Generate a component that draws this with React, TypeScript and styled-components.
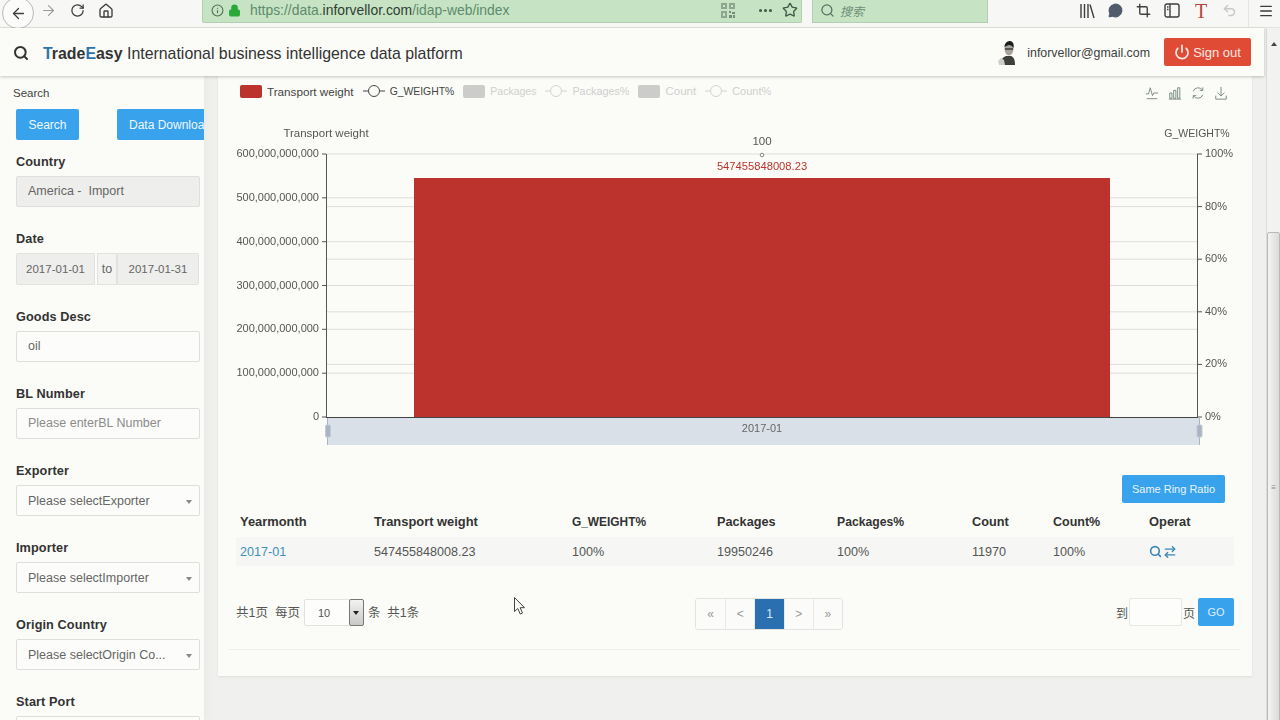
import * as React from "react";
import styled, { createGlobalStyle } from "styled-components";
import {
  ArrowLeft,
  ArrowRight,
  RotateCw,
  Home,
  Info,
  Lock,
  Ellipsis,
  Star,
  Search,
  MessageCircle,
  Crop,
  Undo2,
  Menu,
  Power,
  ArrowRightLeft,
} from "lucide-react";

const GlobalStyle = createGlobalStyle`
  html, body {
    margin: 0;
    padding: 0;
    width: 1280px;
    height: 720px;
    overflow: hidden;
    background: #f0f1ee;
    font-family: "Liberation Sans", Arial, "Noto Sans CJK SC", sans-serif;
    color: #333;
  }
  * { box-sizing: border-box; }
`;

const Shell = styled.div`
  width: 1280px;
  height: 720px;
  display: flex;
  flex-direction: column;
  overflow: hidden;
  position: relative;
`;

/* ---- browser chrome ---- */
const BrowserBar = styled.div`
  height: 28px;
  flex: none;
  display: flex;
  align-items: flex-start;
  background: #f7f7f5;
  border-bottom: 1px solid #e4e4e2;
  color: #3c3c3c;
`;

const BackButton = styled.div`
  width: 32px;
  height: 32px;
  margin: -3px 0 0 2px;
  border: 1px solid #b9b9b9;
  border-radius: 50%;
  background: #fbfbfa;
  display: flex;
  align-items: center;
  justify-content: center;
  flex: none;
`;

const NavIcons = styled.div`
  display: flex;
  align-items: center;
  height: 21px;
  gap: 13px;
  margin-left: 6px;
  width: 162px;
  flex: none;
`;

const UrlBox = styled.div`
  width: 600px;
  height: 23px;
  flex: none;
  background: #c6e4c4;
  border: 1px solid #b3cfb1;
  border-top: 0;
  display: flex;
  align-items: center;
  padding: 0 3px 2px 8px;
  color: #5f8a6c;
  font-size: 13.9px;
  border-radius: 0 0 2px 2px;
`;

const UrlText = styled.span`
  margin-left: 9px;
  flex: 1;
  white-space: nowrap;
  b {
    font-weight: 400;
    color: #2f3d33;
  }
`;

const UrlIcons = styled.div`
  display: flex;
  align-items: center;
  gap: 8px;
  color: #3f5a48;
`;

const SearchBox = styled.div`
  width: 176px;
  height: 23px;
  flex: none;
  margin-left: 10px;
  background: #c6e4c4;
  border: 1px solid #b3cfb1;
  border-top: 0;
  display: flex;
  align-items: center;
  gap: 5px;
  padding: 0 0 2px 7px;
  font-size: 12px;
  font-style: italic;
  color: #6f8f78;
  font-family: "Noto Sans CJK SC", sans-serif;
`;

const ToolIcons = styled.div`
  margin-left: 91px;
  height: 21px;
  display: flex;
  align-items: center;
  gap: 13px;
  color: #3f3f3f;
`;

const FontT = styled.span`
  font-family: "Liberation Serif", serif;
  font-size: 20px;
  color: #b2493c;
  line-height: 24px;
  height: 24px;
  width: 16px;
  text-align: center;
`;

const MenuSlot = styled.div`
  margin-left: 11px;
  padding-left: 9px;
  height: 27px;
  display: flex;
  padding-top: 3px;
  border-left: 1px solid #e4e4e2;
`;

/* ---- page ---- */
const Viewport = styled.div`
  flex: 1;
  min-height: 0;
  display: flex;
`;

const PageColumn = styled.div`
  flex: 1;
  min-width: 0;
  display: flex;
  flex-direction: column;
`;

const Header = styled.header`
  height: 48px;
  flex: none;
  display: flex;
  align-items: center;
  background: #fbfcf8;
  box-shadow: 0 1px 3px rgba(0, 0, 0, 0.22);
  padding: 1px 13px 0 13px;
  position: relative;
  z-index: 2;
`;

const Brand = styled.div`
  margin-left: 14px;
  padding-top: 2px;
  font-size: 15.9px;
  color: #333;
  flex: 1;
  white-space: nowrap;
  b {
    font-weight: 700;
  }
  i {
    font-style: normal;
    color: #2f74a8;
  }
`;

const Email = styled.span`
  font-size: 12.4px;
  margin: 0 14px 0 10px;
  color: #3d3d3d;
`;

const SignOut = styled.button`
  width: 87px;
  height: 28px;
  margin-top: -1px;
  border: 0;
  border-radius: 2px;
  background: #e04b36;
  color: #fbe9e4;
  font: 13px "Liberation Sans", sans-serif;
  display: flex;
  align-items: center;
  justify-content: center;
  gap: 3px;
  padding: 0;
`;

const Body = styled.div`
  flex: 1;
  min-height: 0;
  display: flex;
`;

const Sidebar = styled.aside`
  width: 204px;
  flex: none;
  background: #fbfcf8;
  overflow: hidden;
  padding: 10px 4px 0 16px;
  box-shadow: 3px 0 8px rgba(0, 0, 0, 0.03);
`;

const SidebarTitle = styled.div`
  font-size: 11.5px;
  line-height: 14px;
  margin-left: -3px;
  color: #444;
`;

const ButtonRow = styled.div`
  display: flex;
  gap: 38px;
  margin: 9px -4px 0 0;
  overflow: hidden;
`;

const BlueButton = styled.button`
  height: 31px;
  flex: none;
  border: 0;
  border-radius: 2px 0 0 2px;
  background: #38a2ed;
  color: #f0f8fe;
  font: 12px "Liberation Sans", sans-serif;
  padding: 0 12px;
  white-space: nowrap;
  &:first-child {
    width: 63px;
    padding: 0;
    border-radius: 2px;
  }
`;

const FieldList = styled.div`
  margin-top: 14.5px;
  display: flex;
  flex-direction: column;
  gap: 25.15px;
`;

const Field = styled.div`
  display: flex;
  flex-direction: column;
  gap: 6px;
`;

const Label = styled.label`
  font-size: 12.7px;
  line-height: 15px;
  height: 15px;
  font-weight: 700;
  color: #333;
  letter-spacing: 0.1px;
`;

const InputBox = styled.div<{ $muted?: boolean; $placeholder?: boolean }>`
  height: 31px;
  width: 184px;
  flex: none;
  border: 1px solid #dedfdc;
  border-radius: 2px;
  background: ${(p) => (p.$muted ? "#eeeeec" : "#fcfdfa")};
  color: ${(p) => (p.$placeholder ? "#8b8b8b" : "#666")};
  font-size: 12.5px;
  display: flex;
  align-items: center;
  justify-content: space-between;
  padding: 0 7px 0 11px;
  white-space: nowrap;
`;

const Caret = styled.span`
  width: 0;
  height: 0;
  border-left: 3.5px solid transparent;
  border-right: 3.5px solid transparent;
  border-top: 4px solid #888;
  margin-top: 2px;
`;

const DateGroup = styled.div`
  display: flex;
  height: 32px;
  width: 183px;
  color: #666;
`;

const DateCell = styled.div<{ $w: number; $addon?: boolean }>`
  width: ${(p) => p.$w}px;
  flex: none;
  background: ${(p) => (p.$addon ? "#f3f4f1" : "#eeeeec")};
  border: 1px solid #e2e3e0;
  font-size: ${(p) => (p.$addon ? "12.5px" : "11.5px")};
  display: flex;
  align-items: center;
  justify-content: center;
  &:first-child {
    border-radius: 2px 0 0 2px;
    margin-right: 2px;
  }
  &:last-child {
    border-radius: 0 2px 2px 0;
  }
`;

const Gutter = styled.div`
  width: 14px;
  flex: none;
`;

const Main = styled.main`
  width: 1034px;
  height: 600px;
  flex: none;
  background: #fbfcf8;
  box-shadow: 0 1px 2px rgba(0, 0, 0, 0.08);
  display: flex;
  flex-direction: column;
`;

const LegendBar = styled.div`
  height: 30px;
  flex: none;
  display: flex;
  align-items: center;
  padding: 0 24px 0 22px;
`;

const LegendItem = styled.div<{ $off?: boolean; $size: number }>`
  display: flex;
  align-items: center;
  gap: 5px;
  margin-right: 9px;
  font-size: ${(p) => p.$size}px;
  color: ${(p) => (p.$off ? "#cfcfcd" : "#444")};
  white-space: nowrap;
`;

const Swatch = styled.span<{ $color: string }>`
  width: 22px;
  height: 13px;
  border-radius: 2px;
  background: ${(p) => p.$color};
`;

const Toolbox = styled.div`
  margin-left: auto;
  margin-top: 4px;
  display: flex;
  gap: 9px;
  color: #6f7f78;
`;

const ChartSvg = styled.svg`
  display: block;
  flex: none;
  font-family: "Liberation Sans", sans-serif;
  will-change: transform;
`;

const RatioRow = styled.div`
  display: flex;
  justify-content: flex-end;
  padding: 25px 27px 0 0;
  flex: none;
`;

const RatioButton = styled.button`
  width: 103px;
  height: 28px;
  border: 0;
  border-radius: 2px;
  background: #38a2ed;
  color: #eaf5fd;
  font: 11px "Liberation Sans", sans-serif;
  padding: 0;
`;

const DataTable = styled.table`
  width: 998px;
  margin: 4px 0 0 18px;
  border-collapse: collapse;
  table-layout: fixed;
  flex: none;
  td {
    height: 29px;
    padding: 0 0 0 4px;
    background: #f6f7f4;
    color: #555;
    font-size: 12.6px;
  }
  td a {
    color: #3f8fb8;
  }
`;

const HeadCell = styled.th<{ $size: number }>`
  height: 30px;
  padding: 0 0 1px 4px;
  text-align: left;
  font-weight: 700;
  font-size: ${(p) => p.$size}px;
  color: #333;
`;

const OperatIcons = styled.span`
  display: inline-flex;
  align-items: center;
  gap: 1px;
  color: #3b86b8;
  vertical-align: middle;
`;

const Pager = styled.div`
  margin: 32px 18px 0 18px;
  height: 32px;
  flex: none;
  display: flex;
  align-items: flex-start;
  font-size: 12px;
  color: #555;
  white-space: nowrap;
`;

const PagerInfo = styled.div`
  width: 459px;
  flex: none;
  height: 27px;
  display: flex;
  align-items: center;
  font-size: 12.5px;
  font-family: "Liberation Sans", "Noto Sans CJK SC", sans-serif;
`;

const SizeSelect = styled.div`
  width: 60px;
  height: 27px;
  margin: 1px 4px -1px;
  border: 1px solid #e2e3e0;
  border-radius: 2px;
  background: #fdfdfb;
  display: flex;
  align-items: center;
  justify-content: space-between;
  padding-left: 13px;
  font-size: 11px;
`;

const SizeArrow = styled.span`
  width: 15px;
  height: 27px;
  margin-right: -1px;
  border: 1px solid #777;
  border-radius: 2px;
  background: linear-gradient(#f2f2f2, #c9c9c7);
  display: flex;
  align-items: center;
  justify-content: center;
  &::after {
    content: "";
    border-left: 3px solid transparent;
    border-right: 3px solid transparent;
    border-top: 4px solid #222;
  }
`;

const Pagination = styled.div`
  display: flex;
  height: 32px;
  border: 1px solid #e3e4e1;
  border-radius: 3px;
  overflow: hidden;
  flex: none;
`;

const PageCell = styled.div<{ $active?: boolean }>`
  width: 29.2px;
  display: flex;
  align-items: center;
  justify-content: center;
  color: ${(p) => (p.$active ? "#d9ebf7" : "#999")};
  background: ${(p) => (p.$active ? "#2a6fb0" : "#fbfcf9")};
  border-left: 1px solid #e9eae7;
  font-size: 12px;
  &:first-child {
    border-left: 0;
  }
`;

const GoTo = styled.div`
  margin-left: auto;
  display: flex;
  align-items: center;
  height: 28px;
  font-family: "Liberation Sans", "Noto Sans CJK SC", sans-serif;
`;

const GoInput = styled.div`
  width: 53px;
  height: 28px;
  margin: 0 1px;
  border: 1px solid #e6e7e4;
  border-radius: 2px;
  background: #fdfdfb;
`;

const GoButton = styled.button`
  width: 36px;
  height: 28px;
  margin-left: 3px;
  border: 0;
  border-radius: 2px;
  background: #38a2ed;
  color: #dff0fc;
  font: 11px "Liberation Sans", sans-serif;
  padding: 0;
`;

const Rule = styled.div`
  margin: 19px 12px 0 10px;
  border-top: 1px solid #eff0ed;
  flex: none;
`;

/* ---- scrollbar ---- */
const ScrollTrack = styled.div`
  width: 14px;
  flex: none;
  margin-left: 2px;
  background: #f2f3f0;
  border-left: 1px solid #dcdcda;
  display: flex;
  flex-direction: column;
  align-items: center;
  overflow: hidden;
`;

const ScrollUp = styled.span`
  margin-top: 14px;
  border-left: 3px solid transparent;
  border-right: 3px solid transparent;
  border-bottom: 4px solid #444;
`;

const ScrollThumb = styled.div`
  margin-top: 186px;
  width: 13px;
  height: 510px;
  flex: none;
  background: linear-gradient(90deg, #f3f3f1, #dcdcda);
  border: 1px solid #b9b9b7;
  border-radius: 2px 2px 0 0;
  display: flex;
  align-items: center;
  justify-content: center;
  color: #8a8a8a;
  font-size: 8px;
`;

const Cursor = styled.svg`
  position: absolute;
  left: 514px;
  top: 597px;
`;

const LegendLine = ({ off }: { off?: boolean }) => (
  <svg width="22" height="12" viewBox="0 0 22 12">
    <path d="M0 6h5M17 6h5" stroke={off ? "#d2d2d0" : "#444"} strokeWidth="1" />
    <circle cx="11" cy="6" r="5.5" fill="none" stroke={off ? "#d2d2d0" : "#444"} />
  </svg>
);

const QrIcon = () => (
  <svg width="14" height="15" viewBox="0 0 14 15" fill="#51685a" opacity=".7">
    <path d="M0 0h6v6H0zM8 0h6v6H8zM0 8h6v7H0z" opacity=".7" />
    <path d="M2 2h2v2H2zM10 2h2v2h-2zM2 10h2v3H2z" fill="#c6e4c4" />
    <path d="M8 8h2v2H8zM11 9h3v2h-3zM8 12h3v3H8zM12 12h2v3h-2z" />
  </svg>
);

const LibraryIcon = () => (
  <svg width="16" height="16" viewBox="0 0 16 16" fill="none" stroke="currentColor" strokeWidth="1.4">
    <path d="M2 1v14M5.500 1v14M9 1v14M11 1.500l4 13.500" />
  </svg>
);

const PanelIcon = () => (
  <svg width="16" height="15" viewBox="0 0 16 15" fill="none" stroke="currentColor" strokeWidth="1.4">
    <rect x="1" y="1" width="14" height="13" rx="2" />
    <path d="M6 1v13" />
    <path d="M3 4h1.500M3 6.500h1.500" />
  </svg>
);

const LineTool = () => (
  <svg width="14" height="16" viewBox="0 0 16 16" fill="none" stroke="currentColor" strokeWidth="1">
    <path d="M1 9h3l2-7 2.500 9L10 8h5M2 14.500h12" />
  </svg>
);
const BarTool = () => (
  <svg width="14" height="16" viewBox="0 0 16 16" fill="none" stroke="currentColor" strokeWidth="1">
    <path d="M2 8h2.500v6H2zM6.500 5H9v9H6.500zM11 2h2.500v12H11zM1 15h14" />
  </svg>
);
const RefreshTool = () => (
  <svg width="14" height="16" viewBox="0 0 16 16" fill="none" stroke="currentColor" strokeWidth="1">
    <path d="M2.500 6A6 6 0 0 1 13 4.500M13.500 10A6 6 0 0 1 3 11.500" />
    <path d="M13.500 1.500v3.500H10M2.500 14.500V11H6" />
  </svg>
);
const SaveTool = () => (
  <svg width="14" height="16" viewBox="0 0 16 16" fill="none" stroke="currentColor" strokeWidth="1">
    <path d="M8 1v10M4 7.500l4 4 4-4M2 11v4h12v-4" />
  </svg>
);

const Avatar = () => (
  <svg width="20" height="24" viewBox="0 0 20 24" style={{ flex: "none" }}>
    <path d="M3 24c0-5 3-8 6-9l5 0c3 1 4 4 4 9z" fill="#3f403e" />
    <path d="M1 20l3-3 3 2 1 5H2z" fill="#cfcdc6" />
    <ellipse cx="12" cy="8" rx="4.500" ry="6.500" fill="#a8a29b" />
    <path d="M7.500 6c0-4 3-6 5.500-6s4.500 3 3.500 7c-1-2-3-3-4.500-3s-2.500 1-4.500 2z" fill="#1c1c1b" />
    <path d="M8 8h8" stroke="#222" strokeWidth="1.200" />
  </svg>
);

const fields = [
  { label: "Goods Desc", value: "oil" },
  { label: "BL Number", value: "Please enterBL Number", placeholder: true },
  { label: "Exporter", value: "Please selectExporter", select: true },
  { label: "Importer", value: "Please selectImporter", select: true },
  { label: "Origin Country", value: "Please selectOrigin Co...", select: true },
  { label: "Start Port", value: "", select: true },
];

const leftTicks = [
  { label: "600,000,000,000", y: 154 },
  { label: "500,000,000,000", y: 197.8 },
  { label: "400,000,000,000", y: 241.7 },
  { label: "300,000,000,000", y: 285.5 },
  { label: "200,000,000,000", y: 329.3 },
  { label: "100,000,000,000", y: 373.2 },
  { label: "0", y: 417 },
];
const rightTicks = [
  { label: "100%", y: 154 },
  { label: "80%", y: 206.6 },
  { label: "60%", y: 259.2 },
  { label: "40%", y: 311.8 },
  { label: "20%", y: 364.4 },
  { label: "0%", y: 417 },
];

const Chart = () => (
  <ChartSvg width="1034" height="344" viewBox="218 106 1034 344">
    {leftTicks.slice(0, 6).map((t) => (
      <line key={t.y} x1="326" x2="1197" y1={t.y} y2={t.y} stroke="#dededc" />
    ))}
    {rightTicks.slice(1, 5).map((t) => (
      <line key={t.y} x1="326" x2="1197" y1={t.y} y2={t.y} stroke="#dededc" />
    ))}
    <rect x="414" y="178" width="696" height="239" fill="#bc322d" />
    <path d="M326.500 154v263M1197.500 154v263" stroke="#555" />
    <path d="M326 417.500h872" stroke="#444" />
    {leftTicks.map((t) => (
      <g key={t.label}>
        <line x1="322" x2="326" y1={t.y} y2={t.y} stroke="#555" />
        <text x="319" y={t.y + 3} textAnchor="end" fontSize="11" fill="#555">
          {t.label}
        </text>
      </g>
    ))}
    {rightTicks.map((t) => (
      <g key={t.label}>
        <line x1="1197" x2="1202" y1={t.y} y2={t.y} stroke="#555" />
        <text x="1205" y={t.y + 3} fontSize="11" fill="#555">
          {t.label}
        </text>
      </g>
    ))}
    <text x="326" y="137" textAnchor="middle" fontSize="11.500" fill="#555">
      Transport weight
    </text>
    <text x="1197" y="137" textAnchor="middle" fontSize="10.500" fill="#555">
      G_WEIGHT%
    </text>
    <text x="762" y="145" textAnchor="middle" fontSize="11.500" fill="#555">
      100
    </text>
    <circle cx="762" cy="155" r="1.800" fill="#fbfcf8" stroke="#888" />
    <text x="762" y="170" textAnchor="middle" fontSize="11.200" fill="#bc322d">
      547455848008.23
    </text>
    <rect x="327" y="418" width="872" height="27" fill="#d9e0e8" />
    <text x="762" y="432" textAnchor="middle" fontSize="11" fill="#666">
      2017-01
    </text>
    <path d="M327.500 418v27M1199.500 418v27" stroke="#a9b3c4" />
    <rect x="325.500" y="425" width="5" height="12" rx="1" fill="#a9b3c4" stroke="#c3cad6" />
    <rect x="1197" y="425" width="5" height="12" rx="1" fill="#a9b3c4" stroke="#c3cad6" />
  </ChartSvg>
);

const columns = [
  { name: "Yearmonth", width: 134, size: 12.9 },
  { name: "Transport weight", width: 198, size: 12.9 },
  { name: "G_WEIGHT%", width: 145, size: 11.9 },
  { name: "Packages", width: 120, size: 12.7 },
  { name: "Packages%", width: 135, size: 12.2 },
  { name: "Count", width: 81, size: 12.7 },
  { name: "Count%", width: 96, size: 12.5 },
  { name: "Operat", width: 89, size: 12.9 },
];

export default function App() {
  return (
    <Shell>
      <GlobalStyle />
      <BrowserBar>
        <BackButton>
          <ArrowLeft size={17} strokeWidth={1.8} />
        </BackButton>
        <NavIcons>
          <ArrowRight size={17} strokeWidth={1.5} color="#9a9a9a" />
          <RotateCw size={15} strokeWidth={2} />
          <Home size={16} strokeWidth={2} />
        </NavIcons>
        <UrlBox>
          <Info size={13} color="#4f6e59" />
          <Lock size={13} color="#2aa83a" fill="#2aa83a" style={{ marginLeft: 4 }} />
          <UrlText>
            https://data.<b>inforvellor.com</b>/idap-web/index
          </UrlText>
          <UrlIcons>
            <QrIcon />
            <Ellipsis size={17} strokeWidth={2.4} style={{ marginLeft: 14 }} />
            <Star size={16} strokeWidth={2} />
          </UrlIcons>
        </UrlBox>
        <SearchBox>
          <Search size={15} color="#56705f" />
          搜索
        </SearchBox>
        <ToolIcons>
          <LibraryIcon />
          <MessageCircle size={15} fill="#4f5c6d" color="#4f5c6d" />
          <Crop size={15} strokeWidth={2.2} />
          <PanelIcon />
          <FontT>T</FontT>
          <Undo2 size={15} strokeWidth={2.4} color="#c9c9c7" />
        </ToolIcons>
        <MenuSlot>
          <Menu size={16} />
        </MenuSlot>
      </BrowserBar>
      <Viewport>
        <PageColumn>
          <Header>
            <Search size={16} strokeWidth={3} color="#333" />
            <Brand>
              <b>
                <i>T</i>rade<i>E</i>asy
              </b>{" "}
              International business intelligence data platform
            </Brand>
            <Avatar />
            <Email>inforvellor@gmail.com</Email>
            <SignOut>
              <Power size={16} strokeWidth={2.6} />
              Sign out
            </SignOut>
          </Header>
          <Body>
            <Sidebar>
              <SidebarTitle>Search</SidebarTitle>
              <ButtonRow>
                <BlueButton>Search</BlueButton>
                <BlueButton>Data Download</BlueButton>
              </ButtonRow>
              <FieldList>
                <Field>
                  <Label>Country</Label>
                  <InputBox $muted>America - &nbsp;Import</InputBox>
                </Field>
                <Field>
                  <Label>Date</Label>
                  <DateGroup>
                    <DateCell $w={79}>2017-01-01</DateCell>
                    <DateCell $w={20} $addon>
                      to
                    </DateCell>
                    <DateCell $w={82}>2017-01-31</DateCell>
                  </DateGroup>
                </Field>
                {fields.map((f) => (
                  <Field key={f.label}>
                    <Label>{f.label}</Label>
                    <InputBox $placeholder={f.placeholder}>
                      {f.value}
                      {f.select && <Caret />}
                    </InputBox>
                  </Field>
                ))}
              </FieldList>
            </Sidebar>
            <Gutter />
            <Main>
              <LegendBar>
                <LegendItem $size={11.7}>
                  <Swatch $color="#bc322d" />
                  Transport weight
                </LegendItem>
                <LegendItem $size={10.4}>
                  <LegendLine />
                  G_WEIGHT%
                </LegendItem>
                <LegendItem $off $size={10.5}>
                  <Swatch $color="#cccccb" />
                  Packages
                </LegendItem>
                <LegendItem $off $size={10.8}>
                  <LegendLine off />
                  Packages%
                </LegendItem>
                <LegendItem $off $size={11.5}>
                  <Swatch $color="#cccccb" />
                  Count
                </LegendItem>
                <LegendItem $off $size={11}>
                  <LegendLine off />
                  Count%
                </LegendItem>
                <Toolbox>
                  <LineTool />
                  <BarTool />
                  <RefreshTool />
                  <SaveTool />
                </Toolbox>
              </LegendBar>
              <Chart />
              <RatioRow>
                <RatioButton>Same Ring Ratio</RatioButton>
              </RatioRow>
              <DataTable>
                <colgroup>
                  {columns.map((c) => (
                    <col key={c.name} style={{ width: c.width }} />
                  ))}
                </colgroup>
                <thead>
                  <tr>
                    {columns.map((c) => (
                      <HeadCell key={c.name} $size={c.size}>
                        {c.name}
                      </HeadCell>
                    ))}
                  </tr>
                </thead>
                <tbody>
                  <tr>
                    <td>
                      <a>2017-01</a>
                    </td>
                    <td>547455848008.23</td>
                    <td>100%</td>
                    <td>19950246</td>
                    <td>100%</td>
                    <td>11970</td>
                    <td>100%</td>
                    <td>
                      <OperatIcons>
                        <Search size={13} strokeWidth={3} />
                        <ArrowRightLeft size={14} strokeWidth={2.4} />
                      </OperatIcons>
                    </td>
                  </tr>
                </tbody>
              </DataTable>
              <Pager>
                <PagerInfo>
                  共1页&nbsp;&nbsp;每页
                  <SizeSelect>
                    10
                    <SizeArrow />
                  </SizeSelect>
                  条&nbsp;&nbsp;共1条
                </PagerInfo>
                <Pagination>
                  <PageCell>«</PageCell>
                  <PageCell>&lt;</PageCell>
                  <PageCell $active>1</PageCell>
                  <PageCell>&gt;</PageCell>
                  <PageCell>»</PageCell>
                </Pagination>
                <GoTo>
                  到
                  <GoInput />
                  页
                  <GoButton>GO</GoButton>
                </GoTo>
              </Pager>
              <Rule />
            </Main>
          </Body>
        </PageColumn>
        <ScrollTrack>
          <ScrollUp />
          <ScrollThumb>≡</ScrollThumb>
        </ScrollTrack>
      </Viewport>
      <Cursor width="13" height="18" viewBox="0 0 13 18">
        <path d="M0.500 0.500v14l3.300-3 2.400 5.500 2.300-1-2.400-5.300h4.400z" fill="#fdfdfb" stroke="#444" strokeWidth="1" />
      </Cursor>
    </Shell>
  );
}
